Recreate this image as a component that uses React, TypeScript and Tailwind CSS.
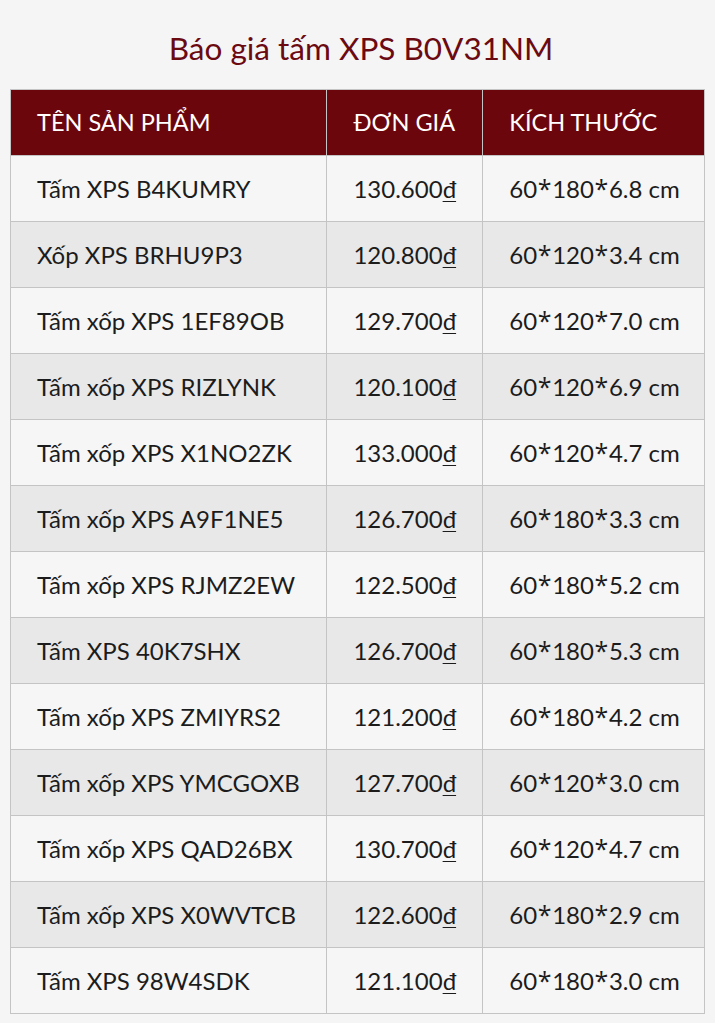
import React from "react";

const rows: [string, string, string][] = [
  ["Tấm XPS B4KUMRY", "130.600", "60*180*6.8 cm"],
  ["Xốp XPS BRHU9P3", "120.800", "60*120*3.4 cm"],
  ["Tấm xốp XPS 1EF89OB", "129.700", "60*120*7.0 cm"],
  ["Tấm xốp XPS RIZLYNK", "120.100", "60*120*6.9 cm"],
  ["Tấm xốp XPS X1NO2ZK", "133.000", "60*120*4.7 cm"],
  ["Tấm xốp XPS A9F1NE5", "126.700", "60*180*3.3 cm"],
  ["Tấm xốp XPS RJMZ2EW", "122.500", "60*180*5.2 cm"],
  ["Tấm XPS 40K7SHX", "126.700", "60*180*5.3 cm"],
  ["Tấm xốp XPS ZMIYRS2", "121.200", "60*180*4.2 cm"],
  ["Tấm xốp XPS YMCGOXB", "127.700", "60*120*3.0 cm"],
  ["Tấm xốp XPS QAD26BX", "130.700", "60*120*4.7 cm"],
  ["Tấm xốp XPS X0WVTCB", "122.600", "60*180*2.9 cm"],
  ["Tấm XPS 98W4SDK", "121.100", "60*180*3.0 cm"],
];

function Size({ v }: { v: string }) {
  const parts = v.split("*");
  return (
    <span>
      {parts.map((p, i) => (
        <React.Fragment key={i}>
          {i > 0 && (
            <span
              className="inline-block w-[15px] text-center text-[25px]"
              style={{ fontFamily: "'Open Sans', sans-serif" }}
            >
              *
            </span>
          )}
          {p}
        </React.Fragment>
      ))}
    </span>
  );
}

export default function App() {
  return (
    <div
      className="min-h-[1023px] w-[715px] bg-[#f5f5f5] pt-[28px]"
      style={{ fontFamily: "Lato, 'Noto Sans', sans-serif" }}
    >
      <h1 className="pl-[7px] text-center text-[31.5px] leading-[40px] font-normal text-[#6b0a10] mb-[21px]">
        Báo giá tấm XPS B0V31NM
      </h1>
      <table className="ml-[10px] w-[695px] border-collapse text-[24px] font-normal text-[#1c1c1c]">
        <colgroup>
          <col className="w-[317px]" />
          <col className="w-[156px]" />
          <col className="w-[222px]" />
        </colgroup>
        <thead>
          <tr className="h-[66px] bg-[#6b060c] text-white text-[23.5px]">
            <th className="border border-[#c4c4c4] pl-[26px] text-left font-normal">TÊN SẢN PHẨM</th>
            <th className="border border-[#c4c4c4] pl-[26px] text-left font-normal">ĐƠN GIÁ</th>
            <th className="border border-[#c4c4c4] pl-[26px] text-left font-normal">KÍCH THƯỚC</th>
          </tr>
        </thead>
        <tbody>
          {rows.map((r, i) => (
            <tr key={i} className={`h-[66px] ${i % 2 === 0 ? "bg-[#f6f6f6]" : "bg-[#e8e8e8]"}`}>
              <td className="border border-[#c4c4c4] pl-[26px]">{r[0]}</td>
              <td className="border border-[#c4c4c4] pl-[26px]">
                {r[1]}
                <span className="underline underline-offset-[3px] decoration-1">đ</span>
              </td>
              <td className="border border-[#c4c4c4] pl-[26px]">
                <Size v={r[2]} />
              </td>
            </tr>
          ))}
        </tbody>
      </table>
    </div>
  );
}
